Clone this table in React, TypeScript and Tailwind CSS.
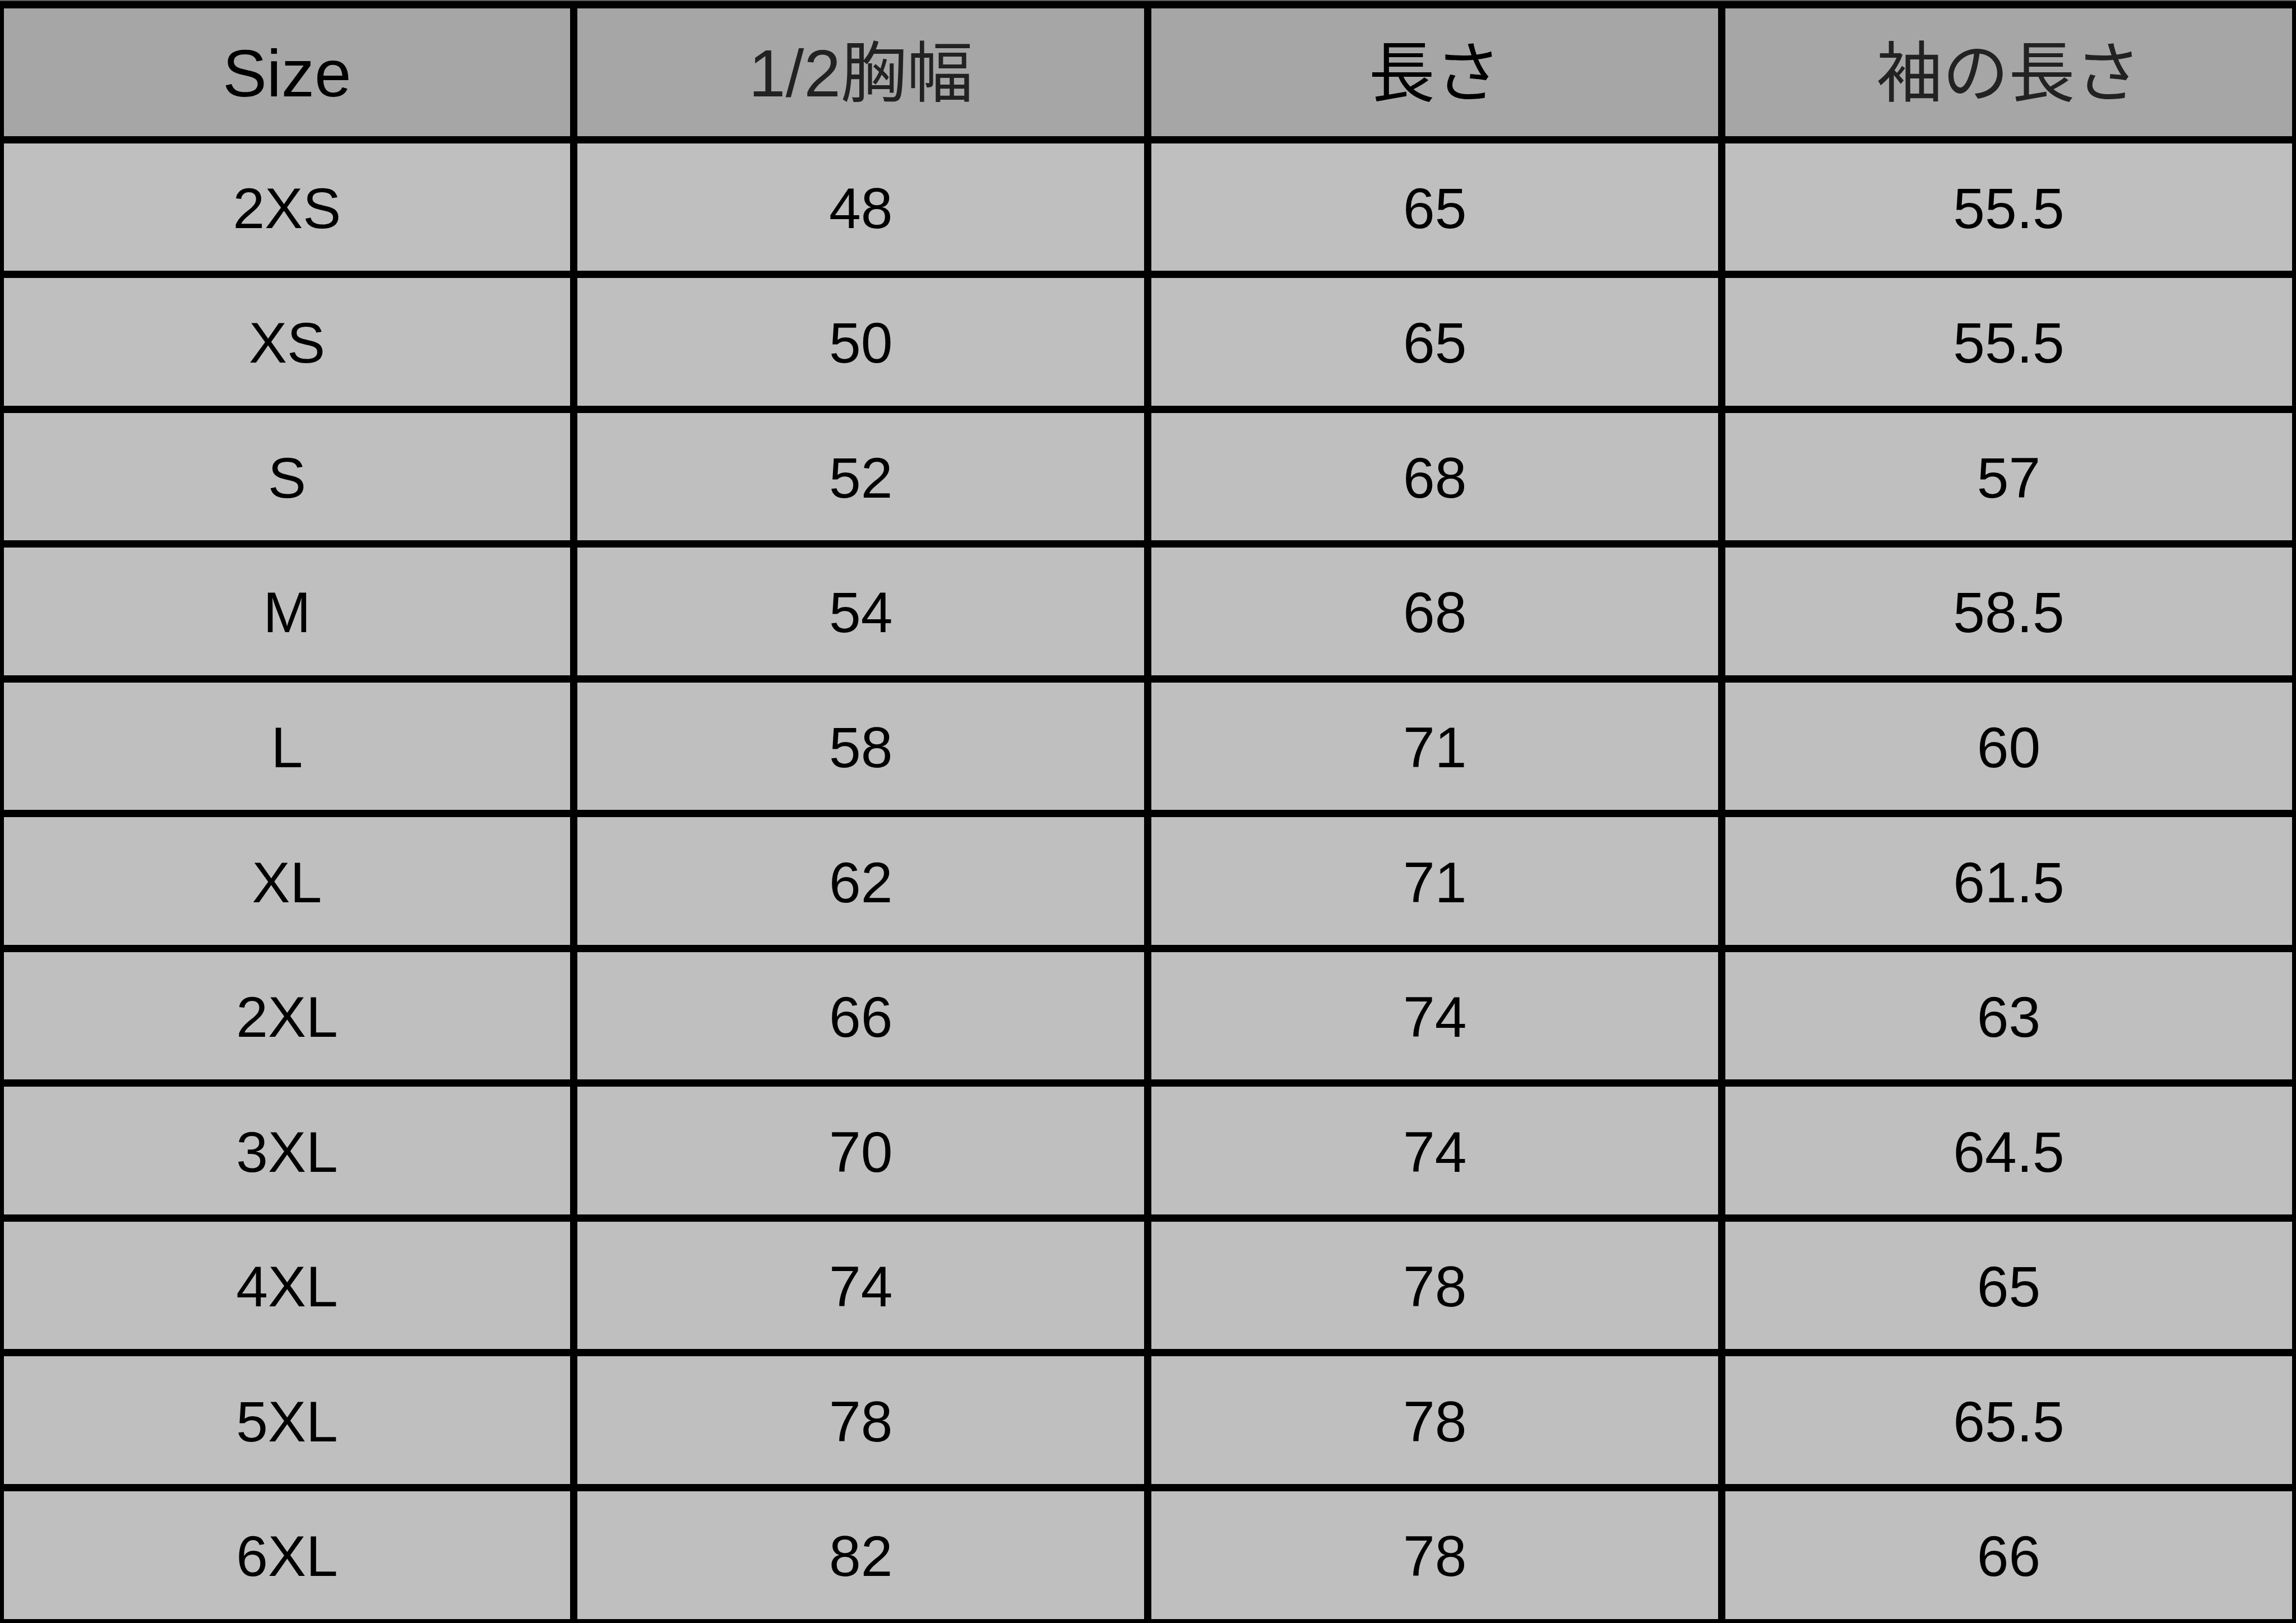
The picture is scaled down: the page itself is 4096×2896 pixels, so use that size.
const headers = [
  { label: "Size", color: "text-black" },
  { label: "1/2胸幅", color: "text-[#222222]" },
  { label: "長さ", color: "text-black" },
  { label: "袖の長さ", color: "text-[#222222]" },
];

const rows = [
  ["2XS", "48", "65", "55.5"],
  ["XS", "50", "65", "55.5"],
  ["S", "52", "68", "57"],
  ["M", "54", "68", "58.5"],
  ["L", "58", "71", "60"],
  ["XL", "62", "71", "61.5"],
  ["2XL", "66", "74", "63"],
  ["3XL", "70", "74", "64.5"],
  ["4XL", "74", "78", "65"],
  ["5XL", "78", "78", "65.5"],
  ["6XL", "82", "78", "66"],
];

export default function App() {
  return (
    <div
      className="w-[4096px] h-[2896px] overflow-hidden bg-black border-t-[2px] border-[#5c5c5c]"
      style={{ fontFamily: '"Liberation Sans", "Noto Sans CJK JP", sans-serif' }}
    >
      <div className="grid grid-cols-4 grid-rows-12 gap-[13px] h-full pt-[13px] pl-[6.5px] pr-[7px] pb-[7.5px]">
        {headers.map((h) => (
          <div
            key={h.label}
            className={`flex items-center justify-center bg-[#a6a6a6] pt-[4px] text-[118px] leading-none ${h.color}`}
          >
            {h.label}
          </div>
        ))}
        {rows.map((row) =>
          row.map((cell, i) => (
            <div
              key={row[0] + "-" + i}
              className="flex items-center justify-center bg-[#bfbfbf] pt-[5px] text-[102px] leading-none text-black"
            >
              {cell}
            </div>
          ))
        )}
      </div>
    </div>
  );
}
